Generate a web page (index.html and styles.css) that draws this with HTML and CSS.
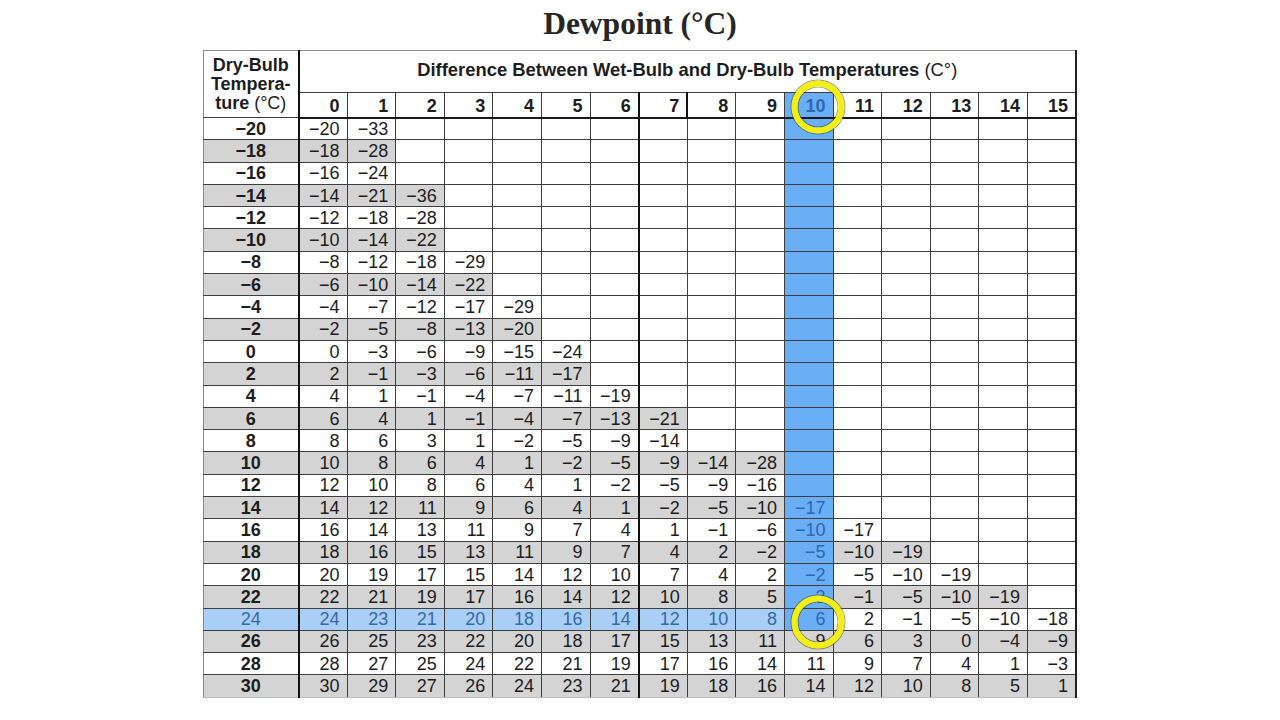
FILE: index.html
```html
<!DOCTYPE html>
<html lang="en">
<head>
<meta charset="utf-8">
<title>Dewpoint (°C)</title>
<link rel="stylesheet" href="styles.css">
</head>
<body>
<h1 class="title">Dewpoint (°C)</h1>
<table class="dew">
  <colgroup><col class="db"><col span="16"></colgroup>
  <thead>
    <tr class="hd1">
      <th rowspan="2" class="dbh">Dry-Bulb<br>Tempera-<br>ture <span class="lt">(°C)</span></th>
      <th colspan="16" class="diff">Difference Between Wet-Bulb and Dry-Bulb Temperatures <span class="lt">(C°)</span></th>
    </tr>
    <tr class="hd2">
      <th>0</th><th>1</th><th>2</th><th>3</th><th>4</th><th>5</th><th class="thick">6</th><th>7</th><th>8</th><th>9</th><th class="c rc">10<span class="ring"></span></th><th>11</th><th>12</th><th>13</th><th>14</th><th class="last">15</th>
    </tr>
  </thead>
  <tbody>
    <tr><th>−20</th><td>−20</td><td>−33</td><td></td><td></td><td></td><td></td><td></td><td></td><td></td><td></td><td class="c"></td><td></td><td></td><td></td><td></td><td></td></tr>
    <tr class="g"><th>−18</th><td>−18</td><td>−28</td><td></td><td></td><td></td><td></td><td></td><td></td><td></td><td></td><td class="c"></td><td></td><td></td><td></td><td></td><td></td></tr>
    <tr><th>−16</th><td>−16</td><td>−24</td><td></td><td></td><td></td><td></td><td></td><td></td><td></td><td></td><td class="c"></td><td></td><td></td><td></td><td></td><td></td></tr>
    <tr class="g"><th>−14</th><td>−14</td><td>−21</td><td>−36</td><td></td><td></td><td></td><td></td><td></td><td></td><td></td><td class="c"></td><td></td><td></td><td></td><td></td><td></td></tr>
    <tr><th>−12</th><td>−12</td><td>−18</td><td>−28</td><td></td><td></td><td></td><td></td><td></td><td></td><td></td><td class="c"></td><td></td><td></td><td></td><td></td><td></td></tr>
    <tr class="g"><th>−10</th><td>−10</td><td>−14</td><td>−22</td><td></td><td></td><td></td><td></td><td></td><td></td><td></td><td class="c"></td><td></td><td></td><td></td><td></td><td></td></tr>
    <tr><th>−8</th><td>−8</td><td>−12</td><td>−18</td><td>−29</td><td></td><td></td><td></td><td></td><td></td><td></td><td class="c"></td><td></td><td></td><td></td><td></td><td></td></tr>
    <tr class="g"><th>−6</th><td>−6</td><td>−10</td><td>−14</td><td>−22</td><td></td><td></td><td></td><td></td><td></td><td></td><td class="c"></td><td></td><td></td><td></td><td></td><td></td></tr>
    <tr><th>−4</th><td>−4</td><td>−7</td><td>−12</td><td>−17</td><td>−29</td><td></td><td></td><td></td><td></td><td></td><td class="c"></td><td></td><td></td><td></td><td></td><td></td></tr>
    <tr class="g"><th>−2</th><td>−2</td><td>−5</td><td>−8</td><td>−13</td><td>−20</td><td></td><td></td><td></td><td></td><td></td><td class="c"></td><td></td><td></td><td></td><td></td><td></td></tr>
    <tr><th>0</th><td>0</td><td>−3</td><td>−6</td><td>−9</td><td>−15</td><td>−24</td><td></td><td></td><td></td><td></td><td class="c"></td><td></td><td></td><td></td><td></td><td></td></tr>
    <tr class="g"><th>2</th><td>2</td><td>−1</td><td>−3</td><td>−6</td><td>−11</td><td>−17</td><td></td><td></td><td></td><td></td><td class="c"></td><td></td><td></td><td></td><td></td><td></td></tr>
    <tr><th>4</th><td>4</td><td>1</td><td>−1</td><td>−4</td><td>−7</td><td>−11</td><td>−19</td><td></td><td></td><td></td><td class="c"></td><td></td><td></td><td></td><td></td><td></td></tr>
    <tr class="g"><th>6</th><td>6</td><td>4</td><td>1</td><td>−1</td><td>−4</td><td>−7</td><td>−13</td><td>−21</td><td></td><td></td><td class="c"></td><td></td><td></td><td></td><td></td><td></td></tr>
    <tr><th>8</th><td>8</td><td>6</td><td>3</td><td>1</td><td>−2</td><td>−5</td><td>−9</td><td>−14</td><td></td><td></td><td class="c"></td><td></td><td></td><td></td><td></td><td></td></tr>
    <tr class="g"><th>10</th><td>10</td><td>8</td><td>6</td><td>4</td><td>1</td><td>−2</td><td>−5</td><td>−9</td><td>−14</td><td>−28</td><td class="c"></td><td></td><td></td><td></td><td></td><td></td></tr>
    <tr><th>12</th><td>12</td><td>10</td><td>8</td><td>6</td><td>4</td><td>1</td><td>−2</td><td>−5</td><td>−9</td><td>−16</td><td class="c"></td><td></td><td></td><td></td><td></td><td></td></tr>
    <tr class="g"><th>14</th><td>14</td><td>12</td><td>11</td><td>9</td><td>6</td><td>4</td><td>1</td><td>−2</td><td>−5</td><td>−10</td><td class="c">−17</td><td></td><td></td><td></td><td></td><td></td></tr>
    <tr><th>16</th><td>16</td><td>14</td><td>13</td><td>11</td><td>9</td><td>7</td><td>4</td><td>1</td><td>−1</td><td>−6</td><td class="c">−10</td><td>−17</td><td></td><td></td><td></td><td></td></tr>
    <tr class="g"><th>18</th><td>18</td><td>16</td><td>15</td><td>13</td><td>11</td><td>9</td><td>7</td><td>4</td><td>2</td><td>−2</td><td class="c">−5</td><td>−10</td><td>−19</td><td></td><td></td><td></td></tr>
    <tr><th>20</th><td>20</td><td>19</td><td>17</td><td>15</td><td>14</td><td>12</td><td>10</td><td>7</td><td>4</td><td>2</td><td class="c">−2</td><td>−5</td><td>−10</td><td>−19</td><td></td><td></td></tr>
    <tr class="g"><th>22</th><td>22</td><td>21</td><td>19</td><td>17</td><td>16</td><td>14</td><td>12</td><td>10</td><td>8</td><td>5</td><td class="c">3</td><td>−1</td><td>−5</td><td>−10</td><td>−19</td><td></td></tr>
    <tr class="hl"><th>24</th><td>24</td><td>23</td><td>21</td><td>20</td><td>18</td><td>16</td><td>14</td><td>12</td><td>10</td><td>8</td><td class="c rc">6<span class="ring"></span></td><td>2</td><td>−1</td><td>−5</td><td>−10</td><td>−18</td></tr>
    <tr class="g"><th>26</th><td>26</td><td>25</td><td>23</td><td>22</td><td>20</td><td>18</td><td>17</td><td>15</td><td>13</td><td>11</td><td>9</td><td>6</td><td>3</td><td>0</td><td>−4</td><td>−9</td></tr>
    <tr><th>28</th><td>28</td><td>27</td><td>25</td><td>24</td><td>22</td><td>21</td><td>19</td><td>17</td><td>16</td><td>14</td><td>11</td><td>9</td><td>7</td><td>4</td><td>1</td><td>−3</td></tr>
    <tr class="g"><th>30</th><td>30</td><td>29</td><td>27</td><td>26</td><td>24</td><td>23</td><td>21</td><td>19</td><td>18</td><td>16</td><td>14</td><td>12</td><td>10</td><td>8</td><td>5</td><td>1</td></tr>
  </tbody>
</table>
</body>
</html>
```
FILE: styles.css
```css
* { box-sizing: border-box; }
html, body { margin: 0; padding: 0; background: #fff; }
body {
  width: 1280px;
  height: 720px;
  overflow: hidden;
  font-family: "Liberation Sans", Arial, sans-serif;
  color: #1d1d1d;
}

.title {
  margin: 0;
  height: 50px;
  text-align: center;
  font-family: "Liberation Serif", "Times New Roman", serif;
  font-weight: bold;
  font-size: 31.5px;
  line-height: 47px;
  color: #262626;
}

.dew {
  width: 874px;
  margin: 0 auto;
  border-collapse: collapse;
  table-layout: fixed;
  font-size: 18px;
}
.dew col.db { width: 95px; }

.dew th, .dew td {
  border: 1px solid #3e3e3e;
  padding: 0 7px 0 0;
  text-align: right;
  white-space: nowrap;
  vertical-align: middle;
  line-height: 20px;
}

.dew thead th { font-weight: bold; }
.dew .hd1 { height: 42px; }
.dew .hd2 { height: 25px; }
.dew .hd1 th { border-top-color: #8a8a8a; }
.dew .diff {
  text-align: center;
  font-size: 18.4px;
  padding: 0 0 3px;
}
.dew .dbh {
  text-align: center;
  font-size: 18px;
  line-height: 19px;
  padding: 0;
  border-left-color: #8a8a8a;
}
.dew .lt { font-weight: normal; }
.dew .hd2 th {
  border-bottom: 2px solid #1a1a1a;
  padding-top: 3px;
}

.dew tbody tr { height: 22.3px; }
.dew tbody th {
  text-align: center;
  padding: 0;
  font-weight: bold;
  border-left-color: #8a8a8a;
}
.dew tbody th,
.dew .dbh { border-right: 2px solid #111; }

.dew tr > :nth-child(8) { border-right: 2px solid #111; }
.dew .hd2 > .thick { border-right: 2px solid #111; }
.dew tr > :last-child { border-right: 2px solid #222; }
.dew tbody tr:last-child > * { border-bottom-color: #bcbcbc; }

/* alternating shading, only on filled cells */
.dew .g > th,
.dew .g > td:not(:empty) { background: #d4d4d4; }

/* highlighted dry-bulb row (24 °C) */
.dew .hl > :nth-child(-n+11) {
  background: #a9cff7;
  color: #3567ad;
}
.dew .hl > th { font-weight: normal; }

/* highlighted difference column (10) */
.dew td.c, .dew th.c,
.dew .g > td.c,
.dew .hl > td.c {
  background: #6aaef6;
  color: #2f66b2;
}

.dew .rc { position: relative; }
.ring {
  position: absolute;
  z-index: 2;
  left: 50%;
  top: 50%;
  width: 53px;
  height: 53px;
  margin-left: 9px;
  margin-top: 3px;
  transform: translate(-50%, -50%);
  border: 6px solid #f3ef12;
  border-radius: 50%;
  box-shadow: 0 0 0 1px rgba(70, 70, 20, 0.55), inset 0 0 0 1px rgba(70, 70, 20, 0.55);
  pointer-events: none;
}
.dew .hd2 .ring { margin-top: 2px; }
```
